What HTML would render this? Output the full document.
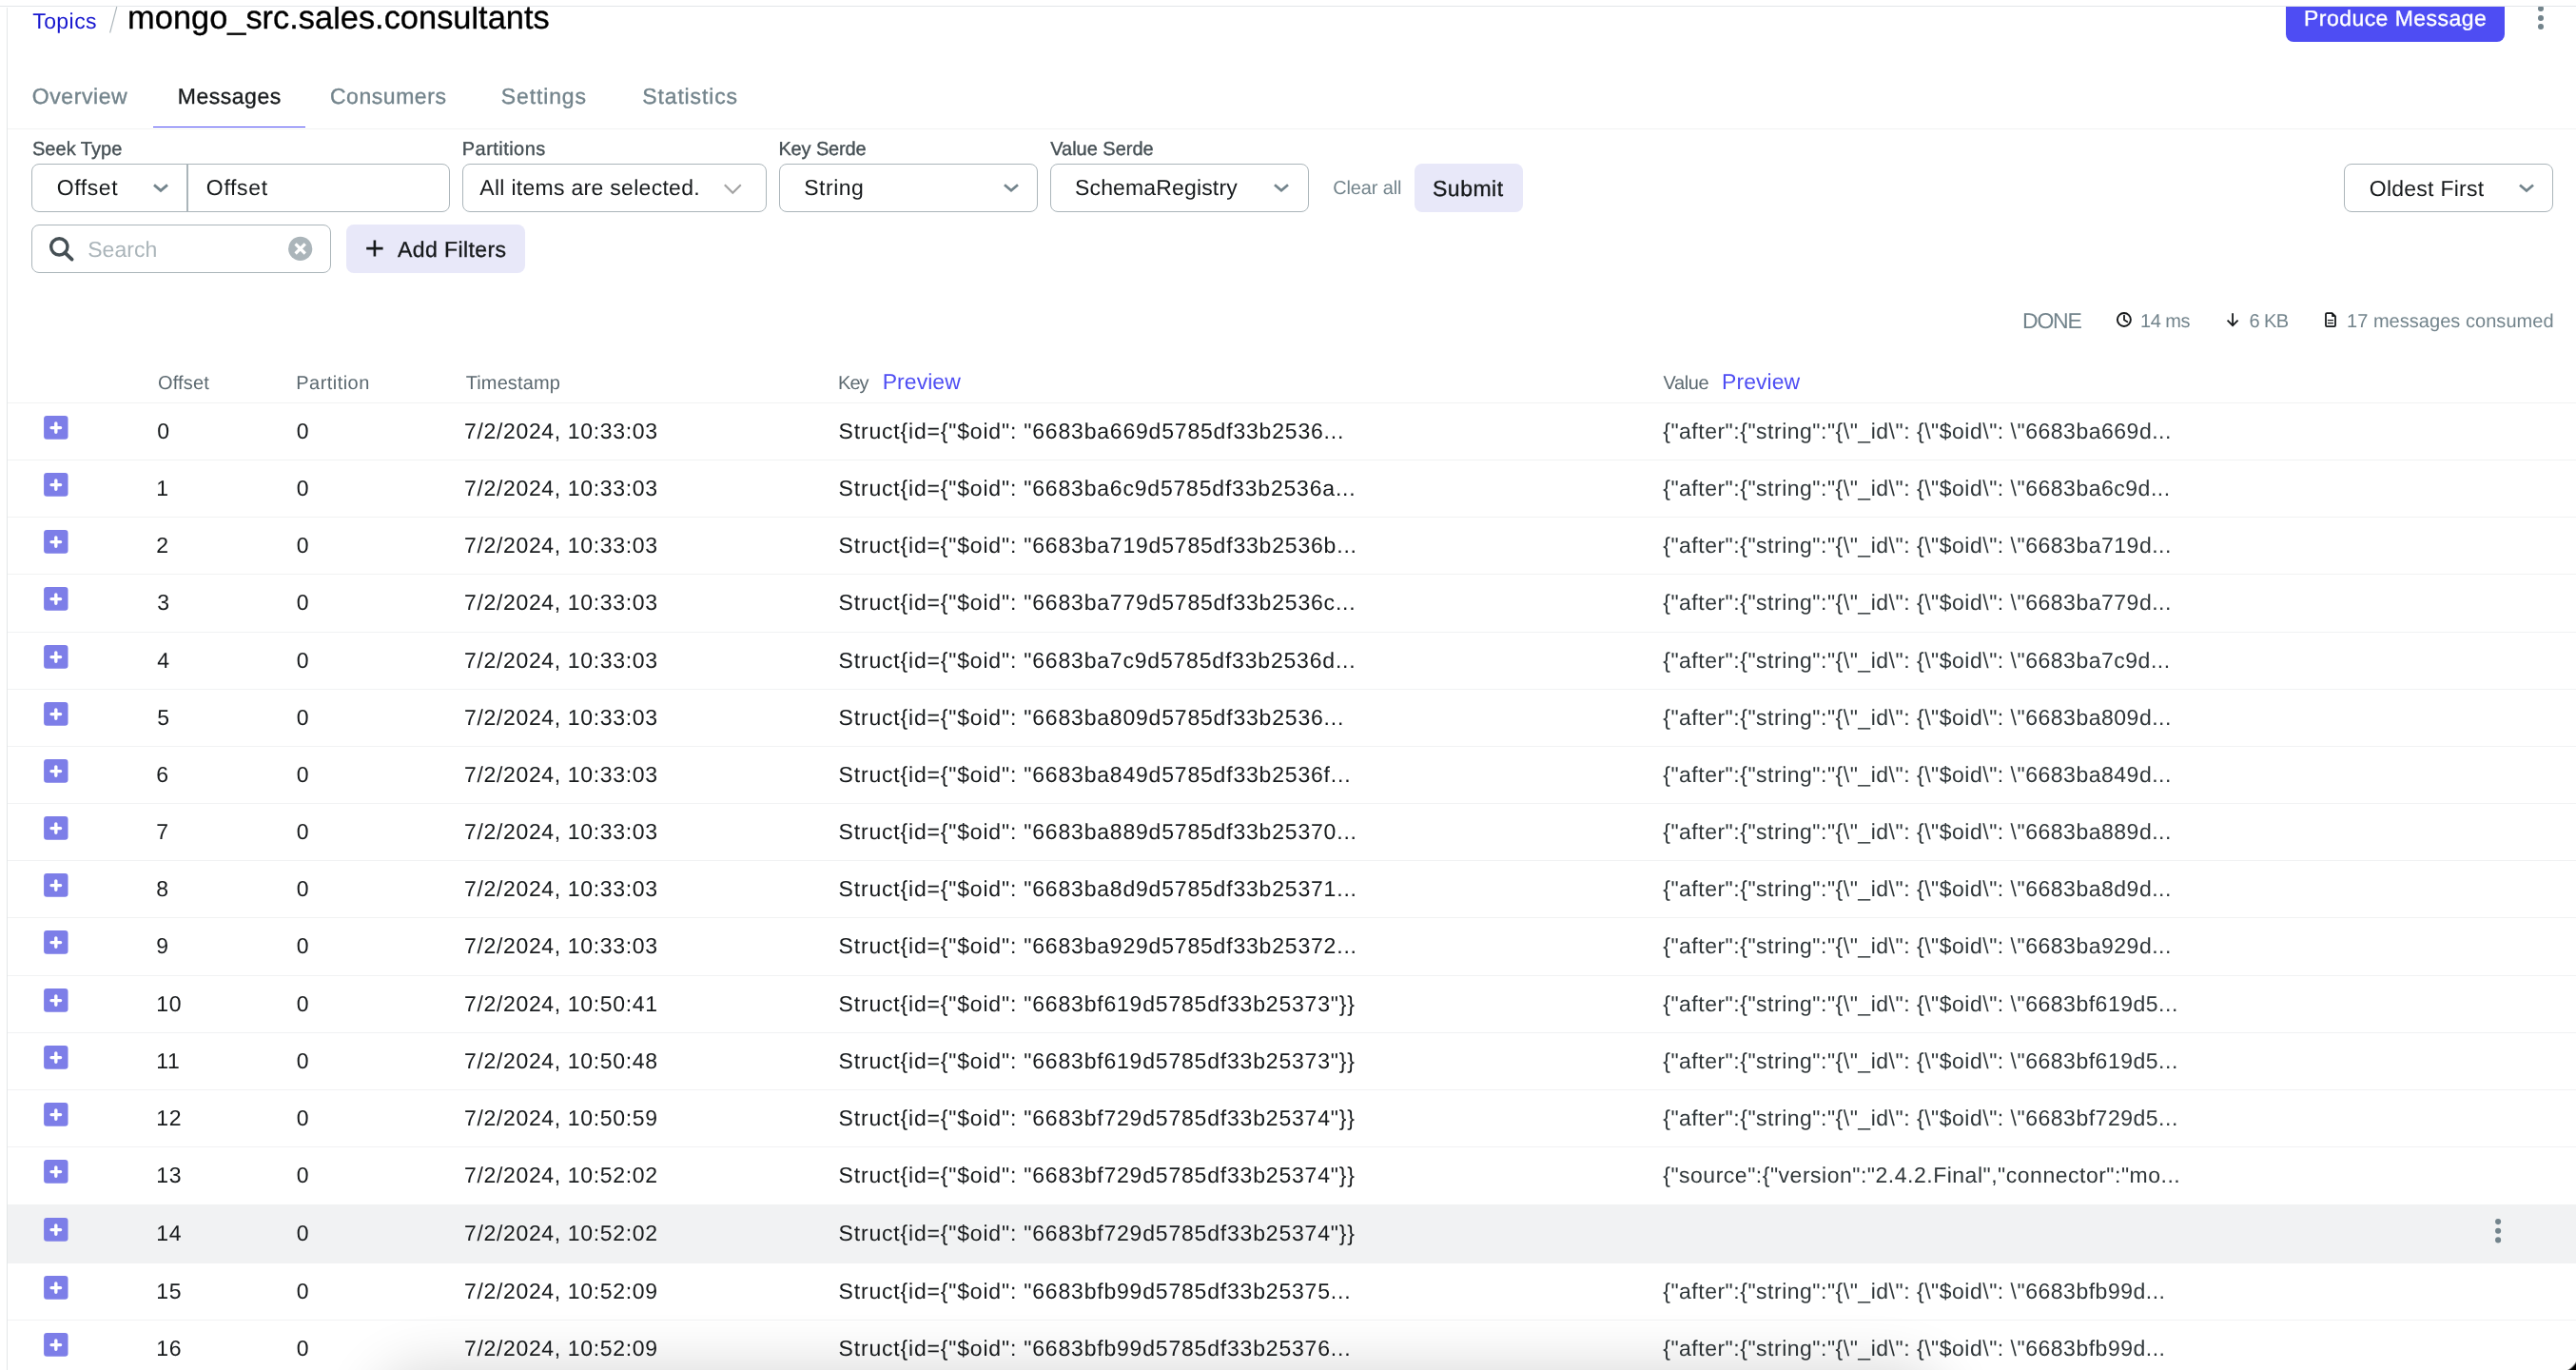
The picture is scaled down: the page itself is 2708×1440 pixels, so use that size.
<!DOCTYPE html>
<html><head><meta charset="utf-8"><title>Kafka UI - Messages</title>
<style>
html,body{margin:0;padding:0;background:#fff;width:2708px;height:1440px;overflow:hidden}
body{position:relative;font-family:"Liberation Sans",sans-serif}
.b{position:absolute}
.t{position:absolute;white-space:pre;font-family:"Liberation Sans",sans-serif;-webkit-font-smoothing:antialiased;text-rendering:geometricPrecision}
.tl{position:absolute;left:0;top:0;width:2708px;height:1440px;will-change:transform}
.ov{position:absolute;left:0;top:0;pointer-events:none}
.sh{position:absolute;left:420px;top:1466px;width:1600px;height:60px;border-radius:60px;box-shadow:0 0 60px 28px rgba(0,0,0,0.16);z-index:8}
.corner{position:absolute;left:2680px;top:1412px;width:28px;height:28px;z-index:9;background:radial-gradient(circle 24px at 8.25px 8.25px, rgba(0,0,0,0) 22px, #000 24px)}
</style></head><body>
<div class="b" style="left:0px;top:0px;width:2708px;height:6px;background:#fff;z-index:5"></div>
<div class="b" style="left:0px;top:6px;width:2708px;height:1px;background:#E3E6E8;z-index:5"></div>
<div class="b" style="left:7px;top:8px;width:1px;height:1432px;background:#E3E6E8"></div>
<div class="b" style="left:2403px;top:-10px;width:230px;height:53.5px;background:#4E4DF3;border-radius:8px"></div>
<div class="b" style="left:2668.2999999999997px;top:6.4px;width:5.8px;height:5.8px;background:#73848C;border-radius:50%"></div>
<div class="b" style="left:2668.2999999999997px;top:15.9px;width:5.8px;height:5.8px;background:#73848C;border-radius:50%"></div>
<div class="b" style="left:2668.2999999999997px;top:25.400000000000002px;width:5.8px;height:5.8px;background:#73848C;border-radius:50%"></div>
<div class="b" style="left:8px;top:135px;width:2700px;height:1px;background:#F1F2F3"></div>
<div class="b" style="left:161px;top:133px;width:160px;height:1.4px;background:#4E4DF3"></div>
<div class="b" style="left:33px;top:172px;width:440px;height:51px;border:1px solid #ABB5BA;border-radius:8px;box-sizing:border-box"></div>
<div class="b" style="left:196px;top:172px;width:2px;height:51px;background:#ABB5BA"></div>
<div class="b" style="left:486px;top:172px;width:320px;height:51px;border:1px solid #ABB5BA;border-radius:8px;box-sizing:border-box"></div>
<div class="b" style="left:819px;top:172px;width:272px;height:51px;border:1px solid #ABB5BA;border-radius:8px;box-sizing:border-box"></div>
<div class="b" style="left:1104px;top:172px;width:272px;height:51px;border:1px solid #ABB5BA;border-radius:8px;box-sizing:border-box"></div>
<div class="b" style="left:1487px;top:172px;width:114px;height:51px;background:#E8E8F9;border-radius:8px"></div>
<div class="b" style="left:2464px;top:172px;width:220px;height:51px;border:1px solid #ABB5BA;border-radius:8px;box-sizing:border-box"></div>
<div class="b" style="left:33px;top:236px;width:315px;height:51px;border:1px solid #ABB5BA;border-radius:8px;box-sizing:border-box"></div>
<div class="b" style="left:364px;top:236px;width:188px;height:51px;background:#E8E8F9;border-radius:8px"></div>
<div class="b" style="left:8px;top:423px;width:2700px;height:1px;background:#F1F2F3"></div>
<div class="b" style="left:8px;top:483px;width:2700px;height:1px;background:#F1F2F3"></div>
<div class="b" style="left:8px;top:543px;width:2700px;height:1px;background:#F1F2F3"></div>
<div class="b" style="left:8px;top:603px;width:2700px;height:1px;background:#F1F2F3"></div>
<div class="b" style="left:8px;top:664px;width:2700px;height:1px;background:#F1F2F3"></div>
<div class="b" style="left:8px;top:724px;width:2700px;height:1px;background:#F1F2F3"></div>
<div class="b" style="left:8px;top:784px;width:2700px;height:1px;background:#F1F2F3"></div>
<div class="b" style="left:8px;top:844px;width:2700px;height:1px;background:#F1F2F3"></div>
<div class="b" style="left:8px;top:904px;width:2700px;height:1px;background:#F1F2F3"></div>
<div class="b" style="left:8px;top:964px;width:2700px;height:1px;background:#F1F2F3"></div>
<div class="b" style="left:8px;top:1025px;width:2700px;height:1px;background:#F1F2F3"></div>
<div class="b" style="left:8px;top:1085px;width:2700px;height:1px;background:#F1F2F3"></div>
<div class="b" style="left:8px;top:1145px;width:2700px;height:1px;background:#F1F2F3"></div>
<div class="b" style="left:8px;top:1205px;width:2700px;height:1px;background:#F1F2F3"></div>
<div class="b" style="left:8px;top:1266px;width:2700px;height:1px;background:#F1F2F3"></div>
<div class="b" style="left:8px;top:1327px;width:2700px;height:1px;background:#F1F2F3"></div>
<div class="b" style="left:8px;top:1387px;width:2700px;height:1px;background:#F1F2F3"></div>
<div class="b" style="left:8px;top:1447px;width:2700px;height:1px;background:#F1F2F3"></div>
<div class="b" style="left:8px;top:1266px;width:2700px;height:62px;background:#F1F2F3"></div>
<svg class="ov" width="2708" height="1440" viewBox="0 0 2708 1440"><line x1="115.6" y1="34.5" x2="122.8" y2="7" stroke="#ABB5BA" stroke-width="1.1"/>
<polyline points="162,194.4 169,200.4 176,194.4" fill="none" stroke="#73848C" stroke-width="2.8" stroke-linecap="butt" stroke-linejoin="miter"/>
<polyline points="761.8,194.2 770.3,202.8 778.8,194.2" fill="none" stroke="#A3A3A3" stroke-width="2.2" stroke-linecap="butt" stroke-linejoin="miter"/>
<polyline points="1056,194.2 1063,200.2 1070,194.2" fill="none" stroke="#73848C" stroke-width="2.8" stroke-linecap="butt" stroke-linejoin="miter"/>
<polyline points="1340,194.2 1347,200.2 1354,194.2" fill="none" stroke="#73848C" stroke-width="2.8" stroke-linecap="butt" stroke-linejoin="miter"/>
<polyline points="2649,194.5 2656,200.5 2663,194.5" fill="none" stroke="#73848C" stroke-width="2.8" stroke-linecap="butt" stroke-linejoin="miter"/>
<circle cx="62.3" cy="259.4" r="8.6" fill="none" stroke="#454F54" stroke-width="3.4"/>
<line x1="68.2" y1="265.6" x2="75.6" y2="272.6" stroke="#454F54" stroke-width="3.8" stroke-linecap="round"/>
<circle cx="315.7" cy="261.4" r="12.6" fill="#ABB5BA"/>
<path d="M310.6 256.3 L320.8 266.5 M320.8 256.3 L310.6 266.5" stroke="#fff" stroke-width="3.2"/>
<path d="M393.9 252.6 V269.6 M385.2 261.1 H402.6" stroke="#171A1C" stroke-width="2.6"/>
<circle cx="2232.9" cy="336" r="7" fill="none" stroke="#171A1C" stroke-width="1.9"/>
<path d="M2233 331.6 V336.3 L2236.3 338.3" fill="none" stroke="#171A1C" stroke-width="1.8" stroke-linecap="round" stroke-linejoin="round"/>
<path d="M2347.1 329.2 V342.2 M2341.6 336.7 L2347.1 342.2 L2352.6 336.7" fill="none" stroke="#171A1C" stroke-width="1.8"/>
<path d="M2445 330.2 Q2445 329.1 2446.1 329.1 H2451.6 L2455 332.5 V342 Q2455 343.1 2453.9 343.1 H2446.1 Q2445 343.1 2445 342 Z" fill="none" stroke="#171A1C" stroke-width="1.8" stroke-linejoin="round"/>
<path d="M2451.2 329.3 L2454.8 332.9 L2451.2 332.9 Z" fill="#171A1C"/>
<path d="M2446.9 336.6 H2452.9 M2446.9 339.6 H2452.9" stroke="#171A1C" stroke-width="1.3"/>
<rect x="46.1" y="437.00" width="25.4" height="24.8" rx="3.2" fill="#7D7EE8"/>
<path d="M58.8 444.85 V454.35 M54 449.60 H63.6" stroke="#fff" stroke-width="3.4" stroke-linecap="round"/>
<rect x="46.1" y="497.00" width="25.4" height="24.8" rx="3.2" fill="#7D7EE8"/>
<path d="M58.8 504.85 V514.35 M54 509.60 H63.6" stroke="#fff" stroke-width="3.4" stroke-linecap="round"/>
<rect x="46.1" y="557.00" width="25.4" height="24.8" rx="3.2" fill="#7D7EE8"/>
<path d="M58.8 564.85 V574.35 M54 569.60 H63.6" stroke="#fff" stroke-width="3.4" stroke-linecap="round"/>
<rect x="46.1" y="617.00" width="25.4" height="24.8" rx="3.2" fill="#7D7EE8"/>
<path d="M58.8 624.85 V634.35 M54 629.60 H63.6" stroke="#fff" stroke-width="3.4" stroke-linecap="round"/>
<rect x="46.1" y="678.00" width="25.4" height="24.8" rx="3.2" fill="#7D7EE8"/>
<path d="M58.8 685.85 V695.35 M54 690.60 H63.6" stroke="#fff" stroke-width="3.4" stroke-linecap="round"/>
<rect x="46.1" y="738.00" width="25.4" height="24.8" rx="3.2" fill="#7D7EE8"/>
<path d="M58.8 745.85 V755.35 M54 750.60 H63.6" stroke="#fff" stroke-width="3.4" stroke-linecap="round"/>
<rect x="46.1" y="798.00" width="25.4" height="24.8" rx="3.2" fill="#7D7EE8"/>
<path d="M58.8 805.85 V815.35 M54 810.60 H63.6" stroke="#fff" stroke-width="3.4" stroke-linecap="round"/>
<rect x="46.1" y="858.00" width="25.4" height="24.8" rx="3.2" fill="#7D7EE8"/>
<path d="M58.8 865.85 V875.35 M54 870.60 H63.6" stroke="#fff" stroke-width="3.4" stroke-linecap="round"/>
<rect x="46.1" y="918.00" width="25.4" height="24.8" rx="3.2" fill="#7D7EE8"/>
<path d="M58.8 925.85 V935.35 M54 930.60 H63.6" stroke="#fff" stroke-width="3.4" stroke-linecap="round"/>
<rect x="46.1" y="978.00" width="25.4" height="24.8" rx="3.2" fill="#7D7EE8"/>
<path d="M58.8 985.85 V995.35 M54 990.60 H63.6" stroke="#fff" stroke-width="3.4" stroke-linecap="round"/>
<rect x="46.1" y="1039.00" width="25.4" height="24.8" rx="3.2" fill="#7D7EE8"/>
<path d="M58.8 1046.85 V1056.35 M54 1051.60 H63.6" stroke="#fff" stroke-width="3.4" stroke-linecap="round"/>
<rect x="46.1" y="1099.00" width="25.4" height="24.8" rx="3.2" fill="#7D7EE8"/>
<path d="M58.8 1106.85 V1116.35 M54 1111.60 H63.6" stroke="#fff" stroke-width="3.4" stroke-linecap="round"/>
<rect x="46.1" y="1159.00" width="25.4" height="24.8" rx="3.2" fill="#7D7EE8"/>
<path d="M58.8 1166.85 V1176.35 M54 1171.60 H63.6" stroke="#fff" stroke-width="3.4" stroke-linecap="round"/>
<rect x="46.1" y="1219.00" width="25.4" height="24.8" rx="3.2" fill="#7D7EE8"/>
<path d="M58.8 1226.85 V1236.35 M54 1231.60 H63.6" stroke="#fff" stroke-width="3.4" stroke-linecap="round"/>
<rect x="46.1" y="1280.00" width="25.4" height="24.8" rx="3.2" fill="#7D7EE8"/>
<path d="M58.8 1287.85 V1297.35 M54 1292.60 H63.6" stroke="#fff" stroke-width="3.4" stroke-linecap="round"/>
<rect x="46.1" y="1341.00" width="25.4" height="24.8" rx="3.2" fill="#7D7EE8"/>
<path d="M58.8 1348.85 V1358.35 M54 1353.60 H63.6" stroke="#fff" stroke-width="3.4" stroke-linecap="round"/>
<rect x="46.1" y="1401.00" width="25.4" height="24.8" rx="3.2" fill="#7D7EE8"/>
<path d="M58.8 1408.85 V1418.35 M54 1413.60 H63.6" stroke="#fff" stroke-width="3.4" stroke-linecap="round"/>
<circle cx="2626.1" cy="1284.1" r="3.05" fill="#73848C"/>
<circle cx="2626.1" cy="1293.8" r="3.05" fill="#73848C"/>
<circle cx="2626.1" cy="1303.4" r="3.05" fill="#73848C"/></svg>
<div class="tl">
<div class="t" style="left:34.20px;top:10.90px;font-size:23.0px;line-height:23.0px;color:#1717CF;letter-spacing:0.441px">Topics</div>
<div class="t" style="left:134.10px;top:1.90px;font-size:34.4px;line-height:34.4px;color:#000000;letter-spacing:0.004px;-webkit-text-stroke:0.35px #000000">mongo_src.sales.consultants</div>
<div class="t" style="left:2422.00px;top:8.00px;font-size:23.0px;line-height:23.0px;color:#FFFFFF;letter-spacing:0.458px;-webkit-text-stroke:0.35px #FFFFFF">Produce Message</div>
<div class="t" style="left:33.75px;top:89.70px;font-size:23.0px;line-height:23.0px;color:#73848C;letter-spacing:0.587px;-webkit-text-stroke:0.35px #73848C">Overview</div>
<div class="t" style="left:186.70px;top:89.70px;font-size:23.0px;line-height:23.0px;color:#171A1C;letter-spacing:0.539px;-webkit-text-stroke:0.35px #171A1C">Messages</div>
<div class="t" style="left:346.90px;top:89.70px;font-size:23.0px;line-height:23.0px;color:#73848C;letter-spacing:0.551px;-webkit-text-stroke:0.35px #73848C">Consumers</div>
<div class="t" style="left:526.80px;top:89.70px;font-size:23.0px;line-height:23.0px;color:#73848C;letter-spacing:0.871px;-webkit-text-stroke:0.35px #73848C">Settings</div>
<div class="t" style="left:675.30px;top:89.70px;font-size:23.0px;line-height:23.0px;color:#73848C;letter-spacing:0.853px;-webkit-text-stroke:0.35px #73848C">Statistics</div>
<div class="t" style="left:34.00px;top:147.40px;font-size:20.0px;line-height:20.0px;color:#454F54;letter-spacing:0.015px;-webkit-text-stroke:0.35px #454F54">Seek Type</div>
<div class="t" style="left:485.80px;top:147.40px;font-size:20.0px;line-height:20.0px;color:#454F54;letter-spacing:0.448px;-webkit-text-stroke:0.35px #454F54">Partitions</div>
<div class="t" style="left:818.40px;top:147.40px;font-size:20.0px;line-height:20.0px;color:#454F54;letter-spacing:-0.133px;-webkit-text-stroke:0.35px #454F54">Key Serde</div>
<div class="t" style="left:1104.20px;top:147.40px;font-size:20.0px;line-height:20.0px;color:#454F54;letter-spacing:-0.017px;-webkit-text-stroke:0.35px #454F54">Value Serde</div>
<div class="t" style="left:59.80px;top:185.70px;font-size:23.0px;line-height:23.0px;color:#171A1C;letter-spacing:0.571px">Offset</div>
<div class="t" style="left:216.80px;top:185.70px;font-size:23.0px;line-height:23.0px;color:#171A1C;letter-spacing:0.691px">Offset</div>
<div class="t" style="left:504.30px;top:185.70px;font-size:23.0px;line-height:23.0px;color:#171A1C;letter-spacing:0.291px">All items are selected.</div>
<div class="t" style="left:845.20px;top:185.70px;font-size:23.0px;line-height:23.0px;color:#171A1C;letter-spacing:0.522px">String</div>
<div class="t" style="left:1130.00px;top:185.70px;font-size:23.0px;line-height:23.0px;color:#171A1C;letter-spacing:0.152px">SchemaRegistry</div>
<div class="t" style="left:1401.20px;top:187.70px;font-size:20.0px;line-height:20.0px;color:#73848C;letter-spacing:-0.140px">Clear all</div>
<div class="t" style="left:1506.00px;top:187.00px;font-size:23.0px;line-height:23.0px;color:#171A1C;letter-spacing:0.501px;-webkit-text-stroke:0.35px #171A1C">Submit</div>
<div class="t" style="left:2490.80px;top:186.50px;font-size:23.0px;line-height:23.0px;color:#171A1C;letter-spacing:0.247px">Oldest First</div>
<div class="t" style="left:92.20px;top:250.90px;font-size:23.0px;line-height:23.0px;color:#ABB5BA;letter-spacing:0.063px">Search</div>
<div class="t" style="left:418.00px;top:251.00px;font-size:23.0px;line-height:23.0px;color:#171A1C;letter-spacing:0.408px;-webkit-text-stroke:0.35px #171A1C">Add Filters</div>
<div class="t" style="left:2126.00px;top:325.70px;font-size:23.0px;line-height:23.0px;color:#73848C;letter-spacing:-1.203px">DONE</div>
<div class="t" style="left:2250.00px;top:327.90px;font-size:20.0px;line-height:20.0px;color:#73848C;letter-spacing:-0.491px">14 ms</div>
<div class="t" style="left:2364.60px;top:327.90px;font-size:20.0px;line-height:20.0px;color:#73848C;letter-spacing:-0.607px">6 KB</div>
<div class="t" style="left:2467.00px;top:327.90px;font-size:20.0px;line-height:20.0px;color:#73848C;letter-spacing:0.039px">17 messages consumed</div>
<div class="t" style="left:165.90px;top:392.90px;font-size:20.0px;line-height:20.0px;color:#5C6970;letter-spacing:0.194px">Offset</div>
<div class="t" style="left:311.30px;top:392.90px;font-size:20.0px;line-height:20.0px;color:#5C6970;letter-spacing:0.457px">Partition</div>
<div class="t" style="left:489.70px;top:392.90px;font-size:20.0px;line-height:20.0px;color:#5C6970;letter-spacing:0.120px">Timestamp</div>
<div class="t" style="left:881.10px;top:392.90px;font-size:20.0px;line-height:20.0px;color:#5C6970;letter-spacing:-0.981px">Key</div>
<div class="t" style="left:927.70px;top:389.90px;font-size:23.0px;line-height:23.0px;color:#4E4DF3;letter-spacing:0.051px">Preview</div>
<div class="t" style="left:1748.60px;top:392.90px;font-size:20.0px;line-height:20.0px;color:#5C6970;letter-spacing:-0.436px">Value</div>
<div class="t" style="left:1810.00px;top:389.90px;font-size:23.0px;line-height:23.0px;color:#4E4DF3;letter-spacing:0.068px">Preview</div>
<div class="t" style="left:165.20px;top:442.00px;font-size:23.0px;line-height:23.0px;color:#171A1C;letter-spacing:0.656px">0</div>
<div class="t" style="left:311.70px;top:442.00px;font-size:23.0px;line-height:23.0px;color:#171A1C;letter-spacing:0.656px">0</div>
<div class="t" style="left:488.00px;top:442.00px;font-size:23.0px;line-height:23.0px;color:#171A1C;letter-spacing:0.656px">7/2/2024, 10:33:03</div>
<div class="t" style="left:881.60px;top:442.00px;font-size:23.0px;line-height:23.0px;color:#171A1C;letter-spacing:0.806px">Struct{id={"$oid": "6683ba669d5785df33b2536...</div>
<div class="t" style="left:1748.20px;top:442.00px;font-size:23.0px;line-height:23.0px;color:#2F3639;letter-spacing:0.509px">{"after":{"string":"{\"_id\": {\"$oid\": \"6683ba669d...</div>
<div class="t" style="left:164.20px;top:502.00px;font-size:23.0px;line-height:23.0px;color:#171A1C;letter-spacing:0.656px">1</div>
<div class="t" style="left:311.70px;top:502.00px;font-size:23.0px;line-height:23.0px;color:#171A1C;letter-spacing:0.656px">0</div>
<div class="t" style="left:488.00px;top:502.00px;font-size:23.0px;line-height:23.0px;color:#171A1C;letter-spacing:0.656px">7/2/2024, 10:33:03</div>
<div class="t" style="left:881.60px;top:502.00px;font-size:23.0px;line-height:23.0px;color:#171A1C;letter-spacing:0.806px">Struct{id={"$oid": "6683ba6c9d5785df33b2536a...</div>
<div class="t" style="left:1748.20px;top:502.00px;font-size:23.0px;line-height:23.0px;color:#2F3639;letter-spacing:0.509px">{"after":{"string":"{\"_id\": {\"$oid\": \"6683ba6c9d...</div>
<div class="t" style="left:164.20px;top:562.00px;font-size:23.0px;line-height:23.0px;color:#171A1C;letter-spacing:0.656px">2</div>
<div class="t" style="left:311.70px;top:562.00px;font-size:23.0px;line-height:23.0px;color:#171A1C;letter-spacing:0.656px">0</div>
<div class="t" style="left:488.00px;top:562.00px;font-size:23.0px;line-height:23.0px;color:#171A1C;letter-spacing:0.656px">7/2/2024, 10:33:03</div>
<div class="t" style="left:881.60px;top:562.00px;font-size:23.0px;line-height:23.0px;color:#171A1C;letter-spacing:0.806px">Struct{id={"$oid": "6683ba719d5785df33b2536b...</div>
<div class="t" style="left:1748.20px;top:562.00px;font-size:23.0px;line-height:23.0px;color:#2F3639;letter-spacing:0.509px">{"after":{"string":"{\"_id\": {\"$oid\": \"6683ba719d...</div>
<div class="t" style="left:165.20px;top:622.00px;font-size:23.0px;line-height:23.0px;color:#171A1C;letter-spacing:0.656px">3</div>
<div class="t" style="left:311.70px;top:622.00px;font-size:23.0px;line-height:23.0px;color:#171A1C;letter-spacing:0.656px">0</div>
<div class="t" style="left:488.00px;top:622.00px;font-size:23.0px;line-height:23.0px;color:#171A1C;letter-spacing:0.656px">7/2/2024, 10:33:03</div>
<div class="t" style="left:881.60px;top:622.00px;font-size:23.0px;line-height:23.0px;color:#171A1C;letter-spacing:0.806px">Struct{id={"$oid": "6683ba779d5785df33b2536c...</div>
<div class="t" style="left:1748.20px;top:622.00px;font-size:23.0px;line-height:23.0px;color:#2F3639;letter-spacing:0.509px">{"after":{"string":"{\"_id\": {\"$oid\": \"6683ba779d...</div>
<div class="t" style="left:165.20px;top:683.00px;font-size:23.0px;line-height:23.0px;color:#171A1C;letter-spacing:0.656px">4</div>
<div class="t" style="left:311.70px;top:683.00px;font-size:23.0px;line-height:23.0px;color:#171A1C;letter-spacing:0.656px">0</div>
<div class="t" style="left:488.00px;top:683.00px;font-size:23.0px;line-height:23.0px;color:#171A1C;letter-spacing:0.656px">7/2/2024, 10:33:03</div>
<div class="t" style="left:881.60px;top:683.00px;font-size:23.0px;line-height:23.0px;color:#171A1C;letter-spacing:0.806px">Struct{id={"$oid": "6683ba7c9d5785df33b2536d...</div>
<div class="t" style="left:1748.20px;top:683.00px;font-size:23.0px;line-height:23.0px;color:#2F3639;letter-spacing:0.509px">{"after":{"string":"{\"_id\": {\"$oid\": \"6683ba7c9d...</div>
<div class="t" style="left:165.20px;top:743.00px;font-size:23.0px;line-height:23.0px;color:#171A1C;letter-spacing:0.656px">5</div>
<div class="t" style="left:311.70px;top:743.00px;font-size:23.0px;line-height:23.0px;color:#171A1C;letter-spacing:0.656px">0</div>
<div class="t" style="left:488.00px;top:743.00px;font-size:23.0px;line-height:23.0px;color:#171A1C;letter-spacing:0.656px">7/2/2024, 10:33:03</div>
<div class="t" style="left:881.60px;top:743.00px;font-size:23.0px;line-height:23.0px;color:#171A1C;letter-spacing:0.806px">Struct{id={"$oid": "6683ba809d5785df33b2536...</div>
<div class="t" style="left:1748.20px;top:743.00px;font-size:23.0px;line-height:23.0px;color:#2F3639;letter-spacing:0.509px">{"after":{"string":"{\"_id\": {\"$oid\": \"6683ba809d...</div>
<div class="t" style="left:164.20px;top:803.00px;font-size:23.0px;line-height:23.0px;color:#171A1C;letter-spacing:0.656px">6</div>
<div class="t" style="left:311.70px;top:803.00px;font-size:23.0px;line-height:23.0px;color:#171A1C;letter-spacing:0.656px">0</div>
<div class="t" style="left:488.00px;top:803.00px;font-size:23.0px;line-height:23.0px;color:#171A1C;letter-spacing:0.656px">7/2/2024, 10:33:03</div>
<div class="t" style="left:881.60px;top:803.00px;font-size:23.0px;line-height:23.0px;color:#171A1C;letter-spacing:0.806px">Struct{id={"$oid": "6683ba849d5785df33b2536f...</div>
<div class="t" style="left:1748.20px;top:803.00px;font-size:23.0px;line-height:23.0px;color:#2F3639;letter-spacing:0.509px">{"after":{"string":"{\"_id\": {\"$oid\": \"6683ba849d...</div>
<div class="t" style="left:164.20px;top:863.00px;font-size:23.0px;line-height:23.0px;color:#171A1C;letter-spacing:0.656px">7</div>
<div class="t" style="left:311.70px;top:863.00px;font-size:23.0px;line-height:23.0px;color:#171A1C;letter-spacing:0.656px">0</div>
<div class="t" style="left:488.00px;top:863.00px;font-size:23.0px;line-height:23.0px;color:#171A1C;letter-spacing:0.656px">7/2/2024, 10:33:03</div>
<div class="t" style="left:881.60px;top:863.00px;font-size:23.0px;line-height:23.0px;color:#171A1C;letter-spacing:0.806px">Struct{id={"$oid": "6683ba889d5785df33b25370...</div>
<div class="t" style="left:1748.20px;top:863.00px;font-size:23.0px;line-height:23.0px;color:#2F3639;letter-spacing:0.509px">{"after":{"string":"{\"_id\": {\"$oid\": \"6683ba889d...</div>
<div class="t" style="left:164.20px;top:923.00px;font-size:23.0px;line-height:23.0px;color:#171A1C;letter-spacing:0.656px">8</div>
<div class="t" style="left:311.70px;top:923.00px;font-size:23.0px;line-height:23.0px;color:#171A1C;letter-spacing:0.656px">0</div>
<div class="t" style="left:488.00px;top:923.00px;font-size:23.0px;line-height:23.0px;color:#171A1C;letter-spacing:0.656px">7/2/2024, 10:33:03</div>
<div class="t" style="left:881.60px;top:923.00px;font-size:23.0px;line-height:23.0px;color:#171A1C;letter-spacing:0.806px">Struct{id={"$oid": "6683ba8d9d5785df33b25371...</div>
<div class="t" style="left:1748.20px;top:923.00px;font-size:23.0px;line-height:23.0px;color:#2F3639;letter-spacing:0.509px">{"after":{"string":"{\"_id\": {\"$oid\": \"6683ba8d9d...</div>
<div class="t" style="left:164.20px;top:983.00px;font-size:23.0px;line-height:23.0px;color:#171A1C;letter-spacing:0.656px">9</div>
<div class="t" style="left:311.70px;top:983.00px;font-size:23.0px;line-height:23.0px;color:#171A1C;letter-spacing:0.656px">0</div>
<div class="t" style="left:488.00px;top:983.00px;font-size:23.0px;line-height:23.0px;color:#171A1C;letter-spacing:0.656px">7/2/2024, 10:33:03</div>
<div class="t" style="left:881.60px;top:983.00px;font-size:23.0px;line-height:23.0px;color:#171A1C;letter-spacing:0.806px">Struct{id={"$oid": "6683ba929d5785df33b25372...</div>
<div class="t" style="left:1748.20px;top:983.00px;font-size:23.0px;line-height:23.0px;color:#2F3639;letter-spacing:0.509px">{"after":{"string":"{\"_id\": {\"$oid\": \"6683ba929d...</div>
<div class="t" style="left:164.20px;top:1044.00px;font-size:23.0px;line-height:23.0px;color:#171A1C;letter-spacing:0.656px">10</div>
<div class="t" style="left:311.70px;top:1044.00px;font-size:23.0px;line-height:23.0px;color:#171A1C;letter-spacing:0.656px">0</div>
<div class="t" style="left:488.00px;top:1044.00px;font-size:23.0px;line-height:23.0px;color:#171A1C;letter-spacing:0.656px">7/2/2024, 10:50:41</div>
<div class="t" style="left:881.60px;top:1044.00px;font-size:23.0px;line-height:23.0px;color:#171A1C;letter-spacing:0.806px">Struct{id={"$oid": "6683bf619d5785df33b25373"}}</div>
<div class="t" style="left:1748.20px;top:1044.00px;font-size:23.0px;line-height:23.0px;color:#2F3639;letter-spacing:0.509px">{"after":{"string":"{\"_id\": {\"$oid\": \"6683bf619d5...</div>
<div class="t" style="left:164.20px;top:1104.00px;font-size:23.0px;line-height:23.0px;color:#171A1C;letter-spacing:0.656px">11</div>
<div class="t" style="left:311.70px;top:1104.00px;font-size:23.0px;line-height:23.0px;color:#171A1C;letter-spacing:0.656px">0</div>
<div class="t" style="left:488.00px;top:1104.00px;font-size:23.0px;line-height:23.0px;color:#171A1C;letter-spacing:0.656px">7/2/2024, 10:50:48</div>
<div class="t" style="left:881.60px;top:1104.00px;font-size:23.0px;line-height:23.0px;color:#171A1C;letter-spacing:0.806px">Struct{id={"$oid": "6683bf619d5785df33b25373"}}</div>
<div class="t" style="left:1748.20px;top:1104.00px;font-size:23.0px;line-height:23.0px;color:#2F3639;letter-spacing:0.509px">{"after":{"string":"{\"_id\": {\"$oid\": \"6683bf619d5...</div>
<div class="t" style="left:164.20px;top:1164.00px;font-size:23.0px;line-height:23.0px;color:#171A1C;letter-spacing:0.656px">12</div>
<div class="t" style="left:311.70px;top:1164.00px;font-size:23.0px;line-height:23.0px;color:#171A1C;letter-spacing:0.656px">0</div>
<div class="t" style="left:488.00px;top:1164.00px;font-size:23.0px;line-height:23.0px;color:#171A1C;letter-spacing:0.656px">7/2/2024, 10:50:59</div>
<div class="t" style="left:881.60px;top:1164.00px;font-size:23.0px;line-height:23.0px;color:#171A1C;letter-spacing:0.806px">Struct{id={"$oid": "6683bf729d5785df33b25374"}}</div>
<div class="t" style="left:1748.20px;top:1164.00px;font-size:23.0px;line-height:23.0px;color:#2F3639;letter-spacing:0.509px">{"after":{"string":"{\"_id\": {\"$oid\": \"6683bf729d5...</div>
<div class="t" style="left:164.20px;top:1224.00px;font-size:23.0px;line-height:23.0px;color:#171A1C;letter-spacing:0.656px">13</div>
<div class="t" style="left:311.70px;top:1224.00px;font-size:23.0px;line-height:23.0px;color:#171A1C;letter-spacing:0.656px">0</div>
<div class="t" style="left:488.00px;top:1224.00px;font-size:23.0px;line-height:23.0px;color:#171A1C;letter-spacing:0.656px">7/2/2024, 10:52:02</div>
<div class="t" style="left:881.60px;top:1224.00px;font-size:23.0px;line-height:23.0px;color:#171A1C;letter-spacing:0.806px">Struct{id={"$oid": "6683bf729d5785df33b25374"}}</div>
<div class="t" style="left:1748.20px;top:1224.00px;font-size:23.0px;line-height:23.0px;color:#2F3639;letter-spacing:0.509px">{"source":{"version":"2.4.2.Final","connector":"mo...</div>
<div class="t" style="left:164.20px;top:1285.00px;font-size:23.0px;line-height:23.0px;color:#171A1C;letter-spacing:0.656px">14</div>
<div class="t" style="left:311.70px;top:1285.00px;font-size:23.0px;line-height:23.0px;color:#171A1C;letter-spacing:0.656px">0</div>
<div class="t" style="left:488.00px;top:1285.00px;font-size:23.0px;line-height:23.0px;color:#171A1C;letter-spacing:0.656px">7/2/2024, 10:52:02</div>
<div class="t" style="left:881.60px;top:1285.00px;font-size:23.0px;line-height:23.0px;color:#171A1C;letter-spacing:0.806px">Struct{id={"$oid": "6683bf729d5785df33b25374"}}</div>
<div class="t" style="left:164.20px;top:1346.00px;font-size:23.0px;line-height:23.0px;color:#171A1C;letter-spacing:0.656px">15</div>
<div class="t" style="left:311.70px;top:1346.00px;font-size:23.0px;line-height:23.0px;color:#171A1C;letter-spacing:0.656px">0</div>
<div class="t" style="left:488.00px;top:1346.00px;font-size:23.0px;line-height:23.0px;color:#171A1C;letter-spacing:0.656px">7/2/2024, 10:52:09</div>
<div class="t" style="left:881.60px;top:1346.00px;font-size:23.0px;line-height:23.0px;color:#171A1C;letter-spacing:0.806px">Struct{id={"$oid": "6683bfb99d5785df33b25375...</div>
<div class="t" style="left:1748.20px;top:1346.00px;font-size:23.0px;line-height:23.0px;color:#2F3639;letter-spacing:0.509px">{"after":{"string":"{\"_id\": {\"$oid\": \"6683bfb99d...</div>
<div class="t" style="left:164.20px;top:1406.00px;font-size:23.0px;line-height:23.0px;color:#171A1C;letter-spacing:0.656px">16</div>
<div class="t" style="left:311.70px;top:1406.00px;font-size:23.0px;line-height:23.0px;color:#171A1C;letter-spacing:0.656px">0</div>
<div class="t" style="left:488.00px;top:1406.00px;font-size:23.0px;line-height:23.0px;color:#171A1C;letter-spacing:0.656px">7/2/2024, 10:52:09</div>
<div class="t" style="left:881.60px;top:1406.00px;font-size:23.0px;line-height:23.0px;color:#171A1C;letter-spacing:0.806px">Struct{id={"$oid": "6683bfb99d5785df33b25376...</div>
<div class="t" style="left:1748.20px;top:1406.00px;font-size:23.0px;line-height:23.0px;color:#2F3639;letter-spacing:0.509px">{"after":{"string":"{\"_id\": {\"$oid\": \"6683bfb99d...</div>
</div>
<div class="sh"></div><div class="corner"></div>
</body></html>
